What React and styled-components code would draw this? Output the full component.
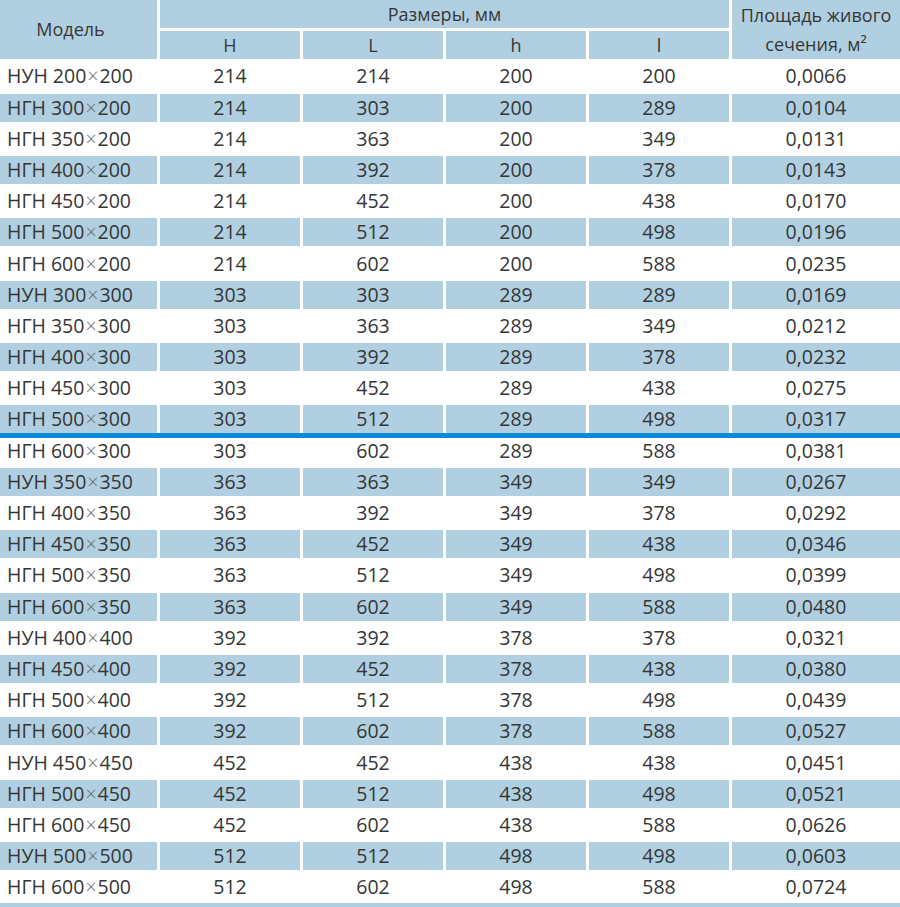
import React from 'react';
import styled, { createGlobalStyle } from 'styled-components';

const GlobalStyle = createGlobalStyle`
    html, body {
        margin: 0;
        padding: 0;
        background: #ffffff;
    }
    body {
        font-family: "Open Sans", "Noto Sans", "DejaVu Sans", sans-serif;
        color: #363636;
    }
`;

const COLUMNS = '157px 140px 140px 140px 140px 1fr';

const Table = styled.div`
    width: 900px;
    display: flex;
    flex-direction: column;
    gap: 3.2px;
    padding-bottom: 2px;
    border-bottom: 4px solid #b0d0e1;
`;

const Head = styled.div`
    display: grid;
    grid-template-columns: ${COLUMNS};
    grid-template-rows: 28px 28px;
    column-gap: 3px;
    row-gap: 3.2px;
`;

const HeadCell = styled.div`
    background: #b0d0e1;
    display: flex;
    align-items: center;
    justify-content: center;
    text-align: center;
    font-size: 18px;
    line-height: 29px;
    grid-column: ${p => p.$col};
    grid-row: ${p => p.$row};
    padding-right: ${p => p.$shift || 0}px;
`;

const Row = styled.div`
    position: relative;
    display: grid;
    grid-template-columns: ${COLUMNS};
    column-gap: 3px;
    height: 28px;

    ${p => p.$divider && `
        &::after {
            content: '';
            position: absolute;
            left: 0;
            right: 0;
            bottom: -5px;
            height: 5px;
            background: #0a8ad8;
        }
    `}
`;

const Cell = styled.div`
    background: ${p => (p.$shaded ? '#b0d0e1' : 'transparent')};
    display: flex;
    align-items: center;
    justify-content: ${p => (p.$left ? 'flex-start' : 'center')};
    padding-left: ${p => (p.$left ? '7px' : '0')};
    font-size: 19.5px;
    line-height: 28px;
    white-space: nowrap;
`;

const Times = styled.span`
    font-weight: 300;
    color: #6a6a6a;
    margin: 0 1px;
`;

const rows = [
    ['НУН 200×200', 214, 214, 200, 200, '0,0066'],
    ['НГН 300×200', 214, 303, 200, 289, '0,0104'],
    ['НГН 350×200', 214, 363, 200, 349, '0,0131'],
    ['НГН 400×200', 214, 392, 200, 378, '0,0143'],
    ['НГН 450×200', 214, 452, 200, 438, '0,0170'],
    ['НГН 500×200', 214, 512, 200, 498, '0,0196'],
    ['НГН 600×200', 214, 602, 200, 588, '0,0235'],
    ['НУН 300×300', 303, 303, 289, 289, '0,0169'],
    ['НГН 350×300', 303, 363, 289, 349, '0,0212'],
    ['НГН 400×300', 303, 392, 289, 378, '0,0232'],
    ['НГН 450×300', 303, 452, 289, 438, '0,0275'],
    ['НГН 500×300', 303, 512, 289, 498, '0,0317'],
    ['НГН 600×300', 303, 602, 289, 588, '0,0381'],
    ['НУН 350×350', 363, 363, 349, 349, '0,0267'],
    ['НГН 400×350', 363, 392, 349, 378, '0,0292'],
    ['НГН 450×350', 363, 452, 349, 438, '0,0346'],
    ['НГН 500×350', 363, 512, 349, 498, '0,0399'],
    ['НГН 600×350', 363, 602, 349, 588, '0,0480'],
    ['НУН 400×400', 392, 392, 378, 378, '0,0321'],
    ['НГН 450×400', 392, 452, 378, 438, '0,0380'],
    ['НГН 500×400', 392, 512, 378, 498, '0,0439'],
    ['НГН 600×400', 392, 602, 378, 588, '0,0527'],
    ['НУН 450×450', 452, 452, 438, 438, '0,0451'],
    ['НГН 500×450', 452, 512, 438, 498, '0,0521'],
    ['НГН 600×450', 452, 602, 438, 588, '0,0626'],
    ['НУН 500×500', 512, 512, 498, 498, '0,0603'],
    ['НГН 600×500', 512, 602, 498, 588, '0,0724'],
];

const ModelName = ({ name }) => {
    const [a, b] = name.split('×');
    return (
        <>
            {a}
            <Times>×</Times>
            {b}
        </>
    );
};

const App = () => {
    return (
        <>
            <GlobalStyle />
            <Table>
                <Head>
                    <HeadCell $col="1" $row="1 / 3" $shift={16}>Модель</HeadCell>
                    <HeadCell $col="2 / 6" $row="1">Размеры, мм</HeadCell>
                    <HeadCell $col="2" $row="2">H</HeadCell>
                    <HeadCell $col="3" $row="2">L</HeadCell>
                    <HeadCell $col="4" $row="2">h</HeadCell>
                    <HeadCell $col="5" $row="2">l</HeadCell>
                    <HeadCell $col="6" $row="1 / 3">
                        Площадь живого<br />сечения, м²
                    </HeadCell>
                </Head>
                {rows.map((row, i) => (
                    <Row key={row[0]} $divider={i === 11}>
                        {row.map((value, j) => (
                            <Cell key={j} $shaded={i % 2 === 1} $left={j === 0}>
                                {j === 0 ? <ModelName name={value} /> : value}
                            </Cell>
                        ))}
                    </Row>
                ))}
            </Table>
        </>
    );
};

export default App;
